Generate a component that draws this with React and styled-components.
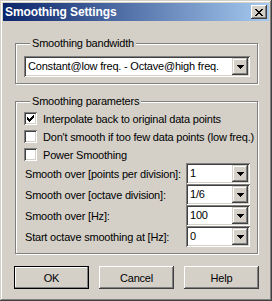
import React from 'react'
import styled, { createGlobalStyle } from 'styled-components'

const GlobalStyle = createGlobalStyle`
  html, body {
    margin: 0;
    padding: 0;
    background: #d4d0c8;
  }
  body {
    font-family: "Liberation Sans", Arial, sans-serif;
    font-size: 11px;
    letter-spacing: -0.2px;
    color: #000;
  }
`

const Window = styled.div`
  box-sizing: border-box;
  width: 272px;
  height: 301px;
  padding: 3px;
  background: #d4d0c8;
  box-shadow: inset -1px -1px #404040, inset 1px 1px #d4d0c8,
    inset -2px -2px #808080, inset 2px 2px #fff;
  display: flex;
  flex-direction: column;
`

const TitleBar = styled.div`
  height: 18px;
  padding: 0 2px;
  display: flex;
  align-items: center;
  justify-content: space-between;
  background: linear-gradient(to right, #0a246a, #a6caf0);
`

const Title = styled.span`
  color: #fff;
  font-weight: bold;
  font-size: 12px;
  letter-spacing: -0.1px;
  line-height: 18px;
`

const CloseButton = styled.div`
  width: 16px;
  height: 14px;
  display: flex;
  align-items: center;
  justify-content: center;
  background: #d4d0c8;
  box-shadow: inset -1px -1px #404040, inset 1px 1px #fff,
    inset -2px -2px #808080, inset 2px 2px #d4d0c8;
`

const Body = styled.div`
  padding: 16px 0 0 12px;
  display: flex;
  flex-direction: column;
`

const Group = styled.fieldset`
  box-sizing: border-box;
  width: 243px;
  min-width: 0;
  margin: ${p => (p.$first ? '0' : '11px 0 0 0')};
  padding: ${p => p.$top}px 7px 6px 8px;
  border: 1px solid #808080;
  box-shadow: 1px 1px 0 #fff, inset 1px 1px 0 #fff;
`

const Legend = styled.legend`
  margin-left: 6px;
  padding: 0 2px;
  line-height: 13px;
  background: #d4d0c8;
`

const Combo = styled.div`
  box-sizing: border-box;
  flex-shrink: 0;
  width: ${p => p.$width}px;
  height: 21px;
  padding: 2px;
  display: flex;
  background: #fff;
  box-shadow: inset 1px 1px #808080, inset -1px -1px #fff,
    inset 2px 2px #404040, inset -2px -2px #d4d0c8;
`

const ComboValue = styled.span`
  flex: 1;
  padding-left: 2px;
  line-height: 17px;
  white-space: nowrap;
  overflow: hidden;
`

const DropButton = styled.div`
  width: 16px;
  height: 17px;
  display: flex;
  align-items: center;
  justify-content: center;
  background: #d4d0c8;
  box-shadow: inset -1px -1px #404040, inset 1px 1px #d4d0c8,
    inset -2px -2px #808080, inset 2px 2px #fff;
`

const CheckRow = styled.div`
  height: 13px;
  margin-bottom: ${p => (p.$last ? 2 : 5)}px;
  display: flex;
  align-items: center;
  gap: 6px;
  white-space: nowrap;
`

const CheckBox = styled.div`
  box-sizing: border-box;
  flex-shrink: 0;
  width: 13px;
  height: 13px;
  padding: 3px;
  background: #fff;
  box-shadow: inset 1px 1px #808080, inset -1px -1px #fff,
    inset 2px 2px #404040, inset -2px -2px #d4d0c8;
`

const FieldRow = styled.div`
  height: 21px;
  display: flex;
  align-items: center;
  justify-content: space-between;
  padding-left: 1px;
  white-space: nowrap;
`

const ButtonRow = styled.div`
  margin: 12px 0 0 -1px;
  display: flex;
  gap: 10px;
`

const Button = styled.div`
  width: 75px;
  height: 23px;
  display: flex;
  align-items: center;
  justify-content: center;
  background: #d4d0c8;
  box-shadow: ${p =>
    p.$default
      ? 'inset 0 0 0 1px #000, inset -2px -2px #808080, inset 2px 2px #fff'
      : 'inset -1px -1px #404040, inset 1px 1px #fff, inset -2px -2px #808080, inset 2px 2px #d4d0c8'};
`

const Pixels = ({ w, h, d }) => (
  <svg width={w} height={h} viewBox={`0 0 ${w} ${h}`} shapeRendering="crispEdges" style={{ display: 'block' }}>
    <path d={d} fill="#000" />
  </svg>
)

const closeGlyph =
  'M0 0h2v1h-2z M6 0h2v1h-2z M1 1h2v1h-2z M5 1h2v1h-2z M2 2h4v1h-4z M3 3h2v1h-2z M2 4h4v1h-4z M1 5h2v1h-2z M5 5h2v1h-2z M0 6h2v1h-2z M6 6h2v1h-2z'
const arrowGlyph = 'M0 0h7v1h-7z M1 1h5v1h-5z M2 2h3v1h-3z M3 3h1v1h-1z'
const checkGlyph =
  'M6 0h1v1h-1z M5 1h2v1h-2z M0 2h1v1h-1z M4 2h3v1h-3z M0 3h2v1h-2z M3 3h3v1h-3z M0 4h5v1h-5z M1 5h3v1h-3z M2 6h1v1h-1z'

const Select = ({ value, width }) => (
  <Combo $width={width}>
    <ComboValue>{value}</ComboValue>
    <DropButton>
      <Pixels w={7} h={4} d={arrowGlyph} />
    </DropButton>
  </Combo>
)

const Check = ({ checked, label, last }) => (
  <CheckRow $last={last}>
    <CheckBox>{checked && <Pixels w={7} h={7} d={checkGlyph} />}</CheckBox>
    <span>{label}</span>
  </CheckRow>
)

const fields = [
  { label: 'Smooth over [points per division]:', value: '1' },
  { label: 'Smooth over [octave division]:', value: '1/6' },
  { label: 'Smooth over [Hz]:', value: '100' },
  { label: 'Start octave smoothing at [Hz]:', value: '0' },
]

const App = () => {
  return (
    <>
      <GlobalStyle />
      <Window>
        <TitleBar>
          <Title>Smoothing Settings</Title>
          <CloseButton>
            <Pixels w={8} h={7} d={closeGlyph} />
          </CloseButton>
        </TitleBar>
        <Body>
          <Group $first $top={6}>
            <Legend>Smoothing bandwidth</Legend>
            <Select value="Constant@low freq. - Octave@high freq." width={226} />
          </Group>
          <Group $top={4}>
            <Legend>Smoothing parameters</Legend>
            <Check checked label="Interpolate back to original data points" />
            <Check label="Don't smooth if too few data points (low freq.)" />
            <Check label="Power Smoothing" last />
            {fields.map(f => (
              <FieldRow key={f.label}>
                <span>{f.label}</span>
                <Select value={f.value} width={64} />
              </FieldRow>
            ))}
          </Group>
          <ButtonRow>
            <Button $default>OK</Button>
            <Button>Cancel</Button>
            <Button>Help</Button>
          </ButtonRow>
        </Body>
      </Window>
    </>
  )
}

export default App
